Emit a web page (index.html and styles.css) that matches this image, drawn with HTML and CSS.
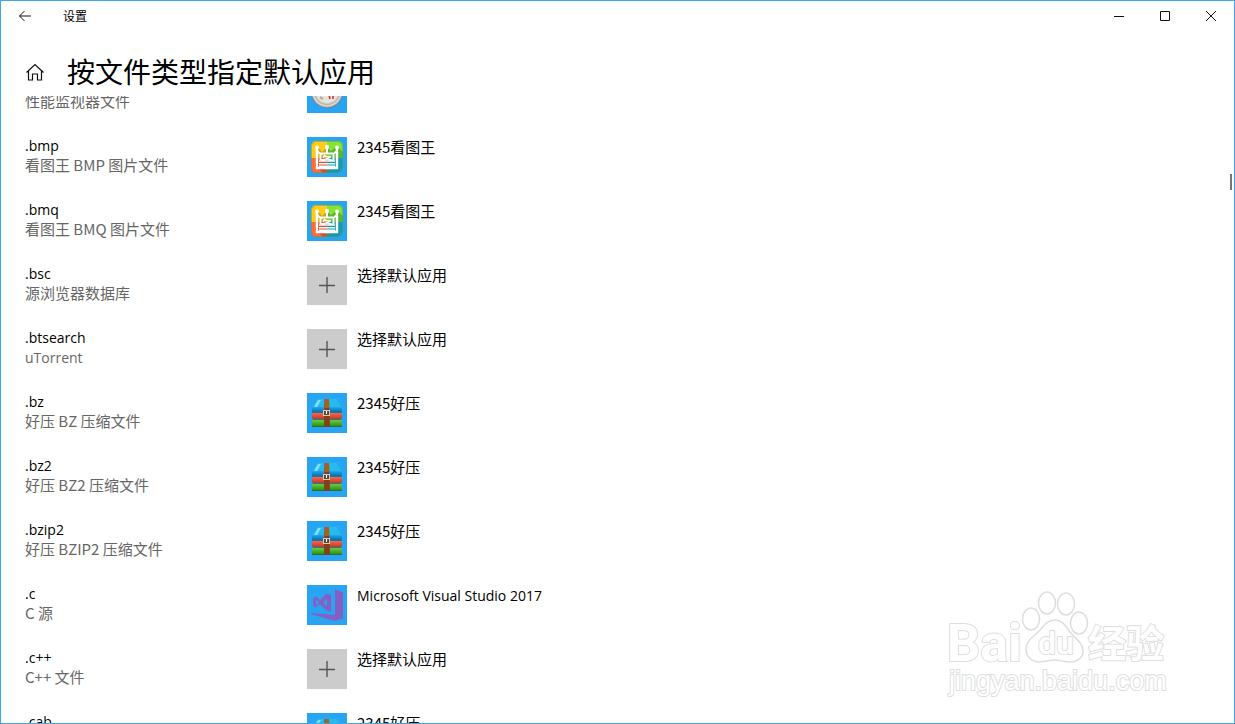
FILE: index.html
```html
<!DOCTYPE html>
<html lang="zh-CN">
<head>
<meta charset="utf-8">
<title>设置</title>
<link rel="stylesheet" href="styles.css">
</head>
<body>
<svg class="defs" aria-hidden="true">
  <symbol id="plus" viewBox="0 0 40 40"><path d="M20 12v16M12 20.500h16" fill="none" stroke="#555" stroke-width="1.400"/></symbol>
  <symbol id="viewer" viewBox="0 0 40 40">
    <clipPath id="vc"><rect x="4" y="4" width="32" height="32" rx="5"/></clipPath>
    <g clip-path="url(#vc)">
      <path fill="#ffcc16" d="M4 4h16v17H4z"/><path fill="#82e52f" d="M20 4h16v17H20z"/>
      <path fill="#ff6b3b" d="M4 21h16v15H4z"/><path fill="#25afc8" d="M20 21h16v15H20z"/>
      <path fill="#cfa41a" d="M11 10l4 5 4-4h1v10h-9z"/><path fill="#59b82c" d="M20 10l4 4 6-5 6 6v6H20z"/>
      <path fill="#d1522c" d="M11 21h9v15h-4l-5-5z"/><path fill="#139cad" d="M20 21h16v10l-5 5H20z"/>
      <rect x="4.500" y="4.500" width="31" height="31" rx="5" fill="none" stroke="#8b8a27" stroke-opacity=".5"/>
    </g>
    <path d="M10 11v20h20V11" fill="none" stroke="#fff" stroke-width="2.400"/>
    <path d="M10 14l3 2.500h14l3-2.500M20 11v6M13.500 17v6M26.500 17v6" fill="none" stroke="#fff" stroke-width="2"/>
    <path d="M18 18l-2 2.500M16 19.500h8M24 19.500l-4 2.500-6 1M19 21.500l7 2M12 24h16M12 26.700h16M12 29.200h16" fill="none" stroke="#fff" stroke-width="1.500"/>
    <circle cx="10" cy="10.500" r="2" fill="#fff"/><circle cx="20" cy="10" r="2.200" fill="#fff"/><circle cx="30" cy="10.500" r="2" fill="#fff"/>
  </symbol>
  <linearGradient id="bb" x2="0" y2="1"><stop stop-color="#25a6e8"/><stop offset="1" stop-color="#0070b5"/></linearGradient>
  <linearGradient id="br" x2="0" y2="1"><stop stop-color="#f5664e"/><stop offset="1" stop-color="#c23a22"/></linearGradient>
  <linearGradient id="bg" x2="0" y2="1"><stop stop-color="#68cc3b"/><stop offset="1" stop-color="#218b13"/></linearGradient>
  <symbol id="zip" viewBox="0 0 40 40">
    <path d="M11 6h19l5 9H5z" fill="#24bbed"/><path d="M11 7h3l-4 7H7z" fill="#83e0fa"/>
    <rect x="5" y="14" width="30" height="5" rx="1" fill="url(#bb)"/>
    <rect x="5" y="20" width="30" height="6" rx="1" fill="url(#br)"/>
    <rect x="5" y="27" width="30" height="7" rx="1" fill="url(#bg)"/>
    <path d="M5 19.500h30M6 26.500h28M5 33.500h30" stroke="#34505c" stroke-opacity=".6"/>
    <path d="M17.500 6h4.500l1 28h-6z" fill="#824018"/><path d="M17.500 6h4.500v9h-4.500z" fill="#ad5d1c"/>
    <rect x="16.500" y="17.500" width="6" height="5" fill="#55402c" stroke="#d5d0c2"/><path d="M19.500 18v3" stroke="#fff" stroke-width="1.200"/>
  </symbol>
  <symbol id="vs" viewBox="0 0 40 40">
    <path fill="#865fc5" fill-rule="evenodd" d="M28 4l8 3.500v26L27.500 36 4 29v-1l24 2zM24 9.500V27l-5-2-6-6-4 3.500-3-1.500V13l3-1.500 4 3.500 6-6zM9 14.500v6l3-3zM20 14l-4 3.500 4 4z"/>
  </symbol>
  <radialGradient id="dial"><stop offset=".66" stop-color="#e6e4df"/><stop offset=".78" stop-color="#b8b4ac"/><stop offset=".88" stop-color="#e0e0e0"/><stop offset="1" stop-color="#77716a"/></radialGradient>
  <symbol id="perf" viewBox="0 0 40 40"><circle cx="20" cy="19" r="16" fill="url(#dial)"/><path d="M22 22l1 4M26 23v3" stroke="#d52b1e" stroke-width="1.500"/><path d="M13 24l3 2" stroke="#aaa38e" stroke-width="2"/></symbol>
</svg>
<div class="window">
  <header class="titlebar">
    <button class="back" aria-label="返回"><svg width="14" height="12" viewBox="0 0 14 12"><path d="M13 6H1.500M6.500 1l-5 5 5 5"/></svg></button>
    <span class="caption">设置</span>
    <button class="control" aria-label="最小化"><svg width="10" height="10"><path d="M0 5.500h10"/></svg></button>
    <button class="control" aria-label="最大化"><svg width="10" height="10"><path d="M.5.5h9v9h-9z"/></svg></button>
    <button class="control" aria-label="关闭"><svg width="10" height="10"><path d="M0 0l10 10M10 0L0 10"/></svg></button>
  </header>
  <div class="heading">
    <button class="home" aria-label="主页"><svg width="20" height="18" viewBox="0 0 20 18"><path d="M1.500 9.500L10 1.500l8.500 8M3.500 8v9h4v-6h5v6h4V8"/></svg></button>
    <h1>按文件类型指定默认应用</h1>
  </div>
  <main class="viewport">
    <ul class="list">
      <li class="row"><div class="type"><span class="ext"></span><span class="desc">性能监视器文件</span></div><button class="app" aria-label="默认应用"><svg class="tile"><use href="#perf"/></svg></button></li>
      <li class="row"><div class="type"><span class="ext">.bmp</span><span class="desc">看图王 BMP 图片文件</span></div><button class="app"><svg class="tile"><use href="#viewer"/></svg><span>2345看图王</span></button></li>
      <li class="row"><div class="type"><span class="ext">.bmq</span><span class="desc">看图王 BMQ 图片文件</span></div><button class="app"><svg class="tile"><use href="#viewer"/></svg><span>2345看图王</span></button></li>
      <li class="row"><div class="type"><span class="ext">.bsc</span><span class="desc">源浏览器数据库</span></div><button class="app"><svg class="tile empty"><use href="#plus"/></svg><span>选择默认应用</span></button></li>
      <li class="row"><div class="type"><span class="ext">.btsearch</span><span class="desc latin">uTorrent</span></div><button class="app"><svg class="tile empty"><use href="#plus"/></svg><span>选择默认应用</span></button></li>
      <li class="row"><div class="type"><span class="ext">.bz</span><span class="desc">好压 BZ 压缩文件</span></div><button class="app"><svg class="tile"><use href="#zip"/></svg><span>2345好压</span></button></li>
      <li class="row"><div class="type"><span class="ext">.bz2</span><span class="desc">好压 BZ2 压缩文件</span></div><button class="app"><svg class="tile"><use href="#zip"/></svg><span>2345好压</span></button></li>
      <li class="row"><div class="type"><span class="ext">.bzip2</span><span class="desc">好压 BZIP2 压缩文件</span></div><button class="app"><svg class="tile"><use href="#zip"/></svg><span>2345好压</span></button></li>
      <li class="row"><div class="type"><span class="ext">.c</span><span class="desc">C 源</span></div><button class="app"><svg class="tile"><use href="#vs"/></svg><span class="latin">Microsoft Visual Studio 2017</span></button></li>
      <li class="row"><div class="type"><span class="ext">.c++</span><span class="desc">C++ 文件</span></div><button class="app"><svg class="tile empty"><use href="#plus"/></svg><span>选择默认应用</span></button></li>
      <li class="row"><div class="type"><span class="ext">.cab</span></div><button class="app"><svg class="tile"><use href="#zip"/></svg><span>2345好压</span></button></li>
    </ul>
    <div class="thumb"></div>
  </main>
  <svg class="watermark" width="230" height="116" viewBox="0 0 230 116">
    <text class="outline bai" x="2" y="74">Bai</text>
    <text class="outline jy" x="143" y="70">经验</text>
    <text class="outline url" x="4" y="103">jingyan.baidu.com</text>
    <g class="paw">
      <ellipse cx="86" cy="32" rx="8.500" ry="11"/><ellipse cx="102" cy="16" rx="8.500" ry="11"/><ellipse cx="121" cy="17" rx="8.500" ry="11"/><ellipse cx="134" cy="36" rx="8.500" ry="11"/>
      <path d="M110 33c8 0 11 7 15 12 6 7 13 11 13 19 0 7-6 11-13 11-6 0-10-2-15-2-6 0-10 2-15 2-8 0-14-5-14-13 0-9 9-13 14-19 4-5 8-10 15-10z"/>
    </g>
    <text class="outline du" x="93" y="67">du</text>
  </svg>
</div>
</body>
</html>
```

FILE: styles.css
```css
* { box-sizing: border-box; }
body {
  margin: 0;
  background: #fff;
  color: #000;
  font: 15px/20px "Noto Sans CJK SC", sans-serif;
}
button {
  border: 0;
  padding: 0;
  background: none;
  color: inherit;
  font: inherit;
  text-align: left;
}
.defs { position: absolute; width: 0; height: 0; }
.window {
  position: relative;
  display: flex;
  flex-direction: column;
  height: 100vh;
  border: 1px solid #3ca7ea;
  overflow: hidden;
}
.titlebar { display: flex; height: 30px; flex: none; }
.titlebar svg, .home svg { fill: none; stroke: #111; stroke-width: 1; }
.back, .control { display: flex; align-items: center; justify-content: center; width: 46px; }
.back { width: 48px; }
.home svg { stroke-width: 1.2; }
.caption { flex: 1; padding-left: 14px; font-size: 12px; line-height: 30px; }
.heading { display: flex; align-items: center; gap: 22px; flex: none; height: 65px; padding: 16px 24px 0; }
.home { display: flex; width: 20px; }
h1 { margin: 0; font-size: 28px; font-weight: 400; line-height: 38px; padding-bottom: 2px; }
.viewport { position: relative; flex: 1; min-height: 0; overflow: hidden; }
.list { margin: -23px 0 0; padding: 0 24px; list-style: none; }
.row { display: grid; grid-template-columns: 282px 1fr; height: 64px; }
.type { display: flex; flex-direction: column; }
.ext, .latin { font-family: "Open Sans", sans-serif; font-size: 14px; }
.latin { line-height: 22px; }
.ext { height: 18px; line-height: 18px; }
.desc { color: #666; }
.app { display: flex; gap: 10px; align-items: flex-start; }
.tile { flex: none; width: 40px; height: 40px; background: #27a4f2; }
.empty { background: #ccc; }
.thumb { position: absolute; top: 78px; right: 2px; width: 2px; height: 16px; background: #767676; }
.watermark { position: absolute; right: 59px; bottom: 20px; pointer-events: none; }
.outline { fill: #fff; stroke: #dedede; stroke-width: 2; paint-order: stroke; }
.paw { fill: #fff; stroke: #dedede; stroke-width: 1.5; }
.bai { font: 700 52px Roboto, sans-serif; }
.du { font: 500 32px Roboto, sans-serif; }
.jy { font: 700 38px "Noto Sans CJK SC", sans-serif; }
.url { font: 400 27px "Liberation Sans", sans-serif; }
```
